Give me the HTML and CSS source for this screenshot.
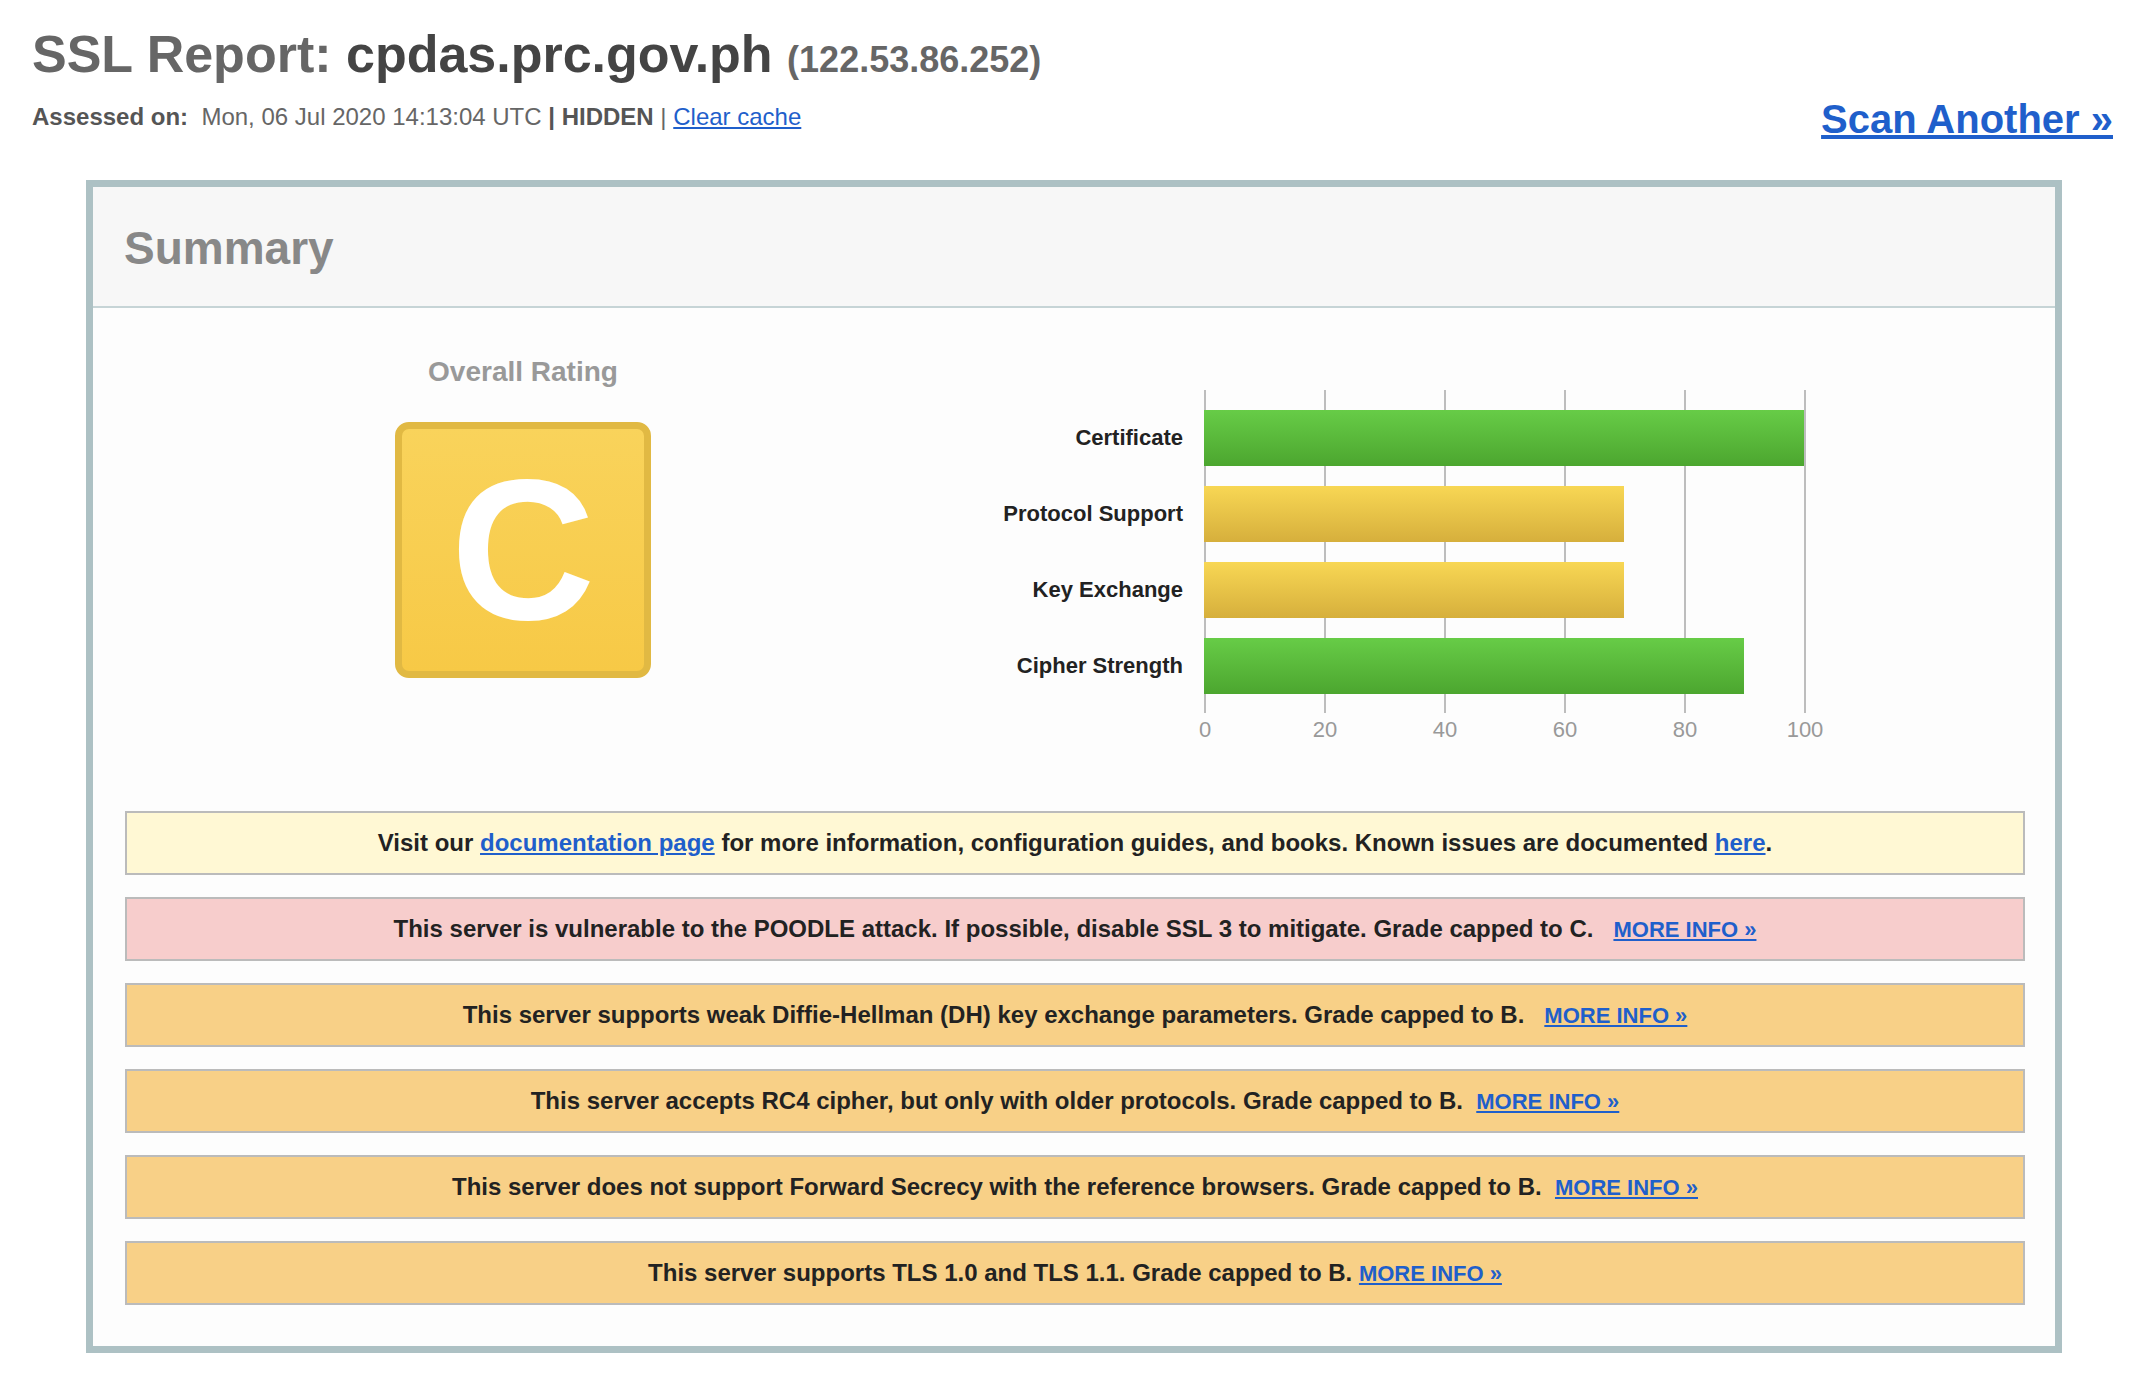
FILE: index.html
```html
<!DOCTYPE html>
<html lang="en">
<head>
<meta charset="utf-8">
<title>SSL Report: cpdas.prc.gov.ph</title>
<link rel="stylesheet" href="styles.css">
</head>
<body>
<div class="top">
  <div class="heading">
    <h1 class="report-title"><span class="lbl">SSL Report:</span> <span class="host">cpdas.prc.gov.ph</span> <span class="ip">(122.53.86.252)</span></h1>
    <div class="assessed"><b>Assessed on:</b>&nbsp; Mon, 06 Jul 2020 14:13:04 UTC <b>| HIDDEN</b> | <a href="#">Clear cache</a></div>
  </div>
  <a class="scan" href="#">Scan Another »</a>
</div>

<div class="report">
  <div class="report-head">Summary</div>
  <div class="report-body">
    <div class="overview">
      <div class="rating-col">
        <div class="rating-label">Overall Rating</div>
        <div class="grade">C</div>
      </div>
      <div class="chart">
        <div class="labels">
          <div class="label">Certificate</div>
          <div class="label">Protocol Support</div>
          <div class="label">Key Exchange</div>
          <div class="label">Cipher Strength</div>
        </div>
        <div class="plot">
          <div class="bar green" style="width:600px"></div>
          <div class="bar yellow" style="width:420px"></div>
          <div class="bar yellow" style="width:420px"></div>
          <div class="bar green" style="width:540px"></div>
        </div>
        <div class="axis">
          <span class="tick">0</span>
          <span class="tick">20</span>
          <span class="tick">40</span>
          <span class="tick">60</span>
          <span class="tick">80</span>
          <span class="tick">100</span>
        </div>
      </div>
    </div>
    <div class="msgs">
      <div class="msg info">Visit our <a href="#">documentation page</a> for more information, configuration guides, and books. Known issues are documented <a href="#">here</a>.</div>
      <div class="msg error">This server is vulnerable to the POODLE attack. If possible, disable SSL 3 to mitigate. Grade capped to C.&nbsp;&nbsp; <a class="more" href="#">MORE INFO »</a></div>
      <div class="msg warn">This server supports weak Diffie-Hellman (DH) key exchange parameters. Grade capped to B.&nbsp;&nbsp; <a class="more" href="#">MORE INFO »</a></div>
      <div class="msg warn">This server accepts RC4 cipher, but only with older protocols. Grade capped to B.&nbsp; <a class="more" href="#">MORE INFO »</a></div>
      <div class="msg warn">This server does not support Forward Secrecy with the reference browsers. Grade capped to B.&nbsp; <a class="more" href="#">MORE INFO »</a></div>
      <div class="msg warn">This server supports TLS 1.0 and TLS 1.1. Grade capped to B. <a class="more" href="#">MORE INFO »</a></div>
    </div>
  </div>
</div>
</body>
</html>
```

FILE: styles.css
```css
* { box-sizing: border-box; }

body {
  margin: 0;
  background: #ffffff;
  font-family: "Liberation Sans", Arial, Helvetica, sans-serif;
  color: #222222;
}

a { color: #1f5fcb; }

.top {
  display: flex;
  justify-content: space-between;
  align-items: flex-start;
  padding: 24px 31px 0 32px;
}

.report-title {
  margin: 0;
  font-size: 52px;
  line-height: 60px;
  font-weight: bold;
  color: #666666;
  white-space: nowrap;
}
.report-title .host { color: #444444; }
.report-title .ip { font-size: 36px; color: #666666; }

.assessed {
  margin-top: 13px;
  font-size: 24px;
  line-height: 28px;
  color: #666666;
  white-space: nowrap;
}
.assessed b { color: #555555; }

.scan {
  margin-top: 72px;
  font-size: 40px;
  line-height: 46px;
  font-weight: bold;
  white-space: nowrap;
}

.report {
  margin: 38px 0 0 86px;
  width: 1976px;
  border: 7px solid #adc1c4;
  background: #fdfdfd;
}

.report-head {
  height: 121px;
  padding: 35px 0 0 31px;
  background: #f7f7f7;
  border-bottom: 2px solid #c6d4d6;
  font-size: 46px;
  line-height: 52px;
  font-weight: bold;
  color: #888888;
}

.overview {
  display: flex;
  align-items: flex-start;
}

.rating-col {
  width: 860px;
  padding-top: 48px;
  text-align: center;
}

.rating-label {
  font-size: 28px;
  line-height: 31px;
  font-weight: bold;
  color: #999999;
}

.grade {
  width: 256px;
  height: 256px;
  margin: 35px auto 0;
  border: 7px solid #e1b943;
  border-radius: 14px;
  background: linear-gradient(#f9d35b, #f7c946);
  color: #ffffff;
  font-size: 200px;
  line-height: 242px;
  font-weight: bold;
  text-align: center;
}

.chart {
  margin-top: 82px;
  display: grid;
  grid-template-columns: 230px 602px;
  column-gap: 21px;
}

.labels {
  padding-top: 20px;
  display: flex;
  flex-direction: column;
  gap: 20px;
}

.label {
  height: 56px;
  line-height: 56px;
  text-align: right;
  font-size: 22px;
  font-weight: bold;
  color: #222222;
  white-space: nowrap;
}

.plot {
  height: 323px;
  padding-top: 20px;
  display: flex;
  flex-direction: column;
  gap: 20px;
  background-image: linear-gradient(to right, #bdbdbd 0, #bdbdbd 2px, transparent 2px);
  background-size: 120px 100%;
  background-repeat: repeat-x;
}

.bar { height: 56px; }
.bar.green { background: linear-gradient(#67cc47, #4ca62f); }
.bar.yellow { background: linear-gradient(#f8d754, #d6af3c); }

.axis {
  grid-column: 2;
  margin: 4px 0 0 1px;
  width: 600px;
  display: flex;
  justify-content: space-between;
}

.tick {
  width: 0;
  display: flex;
  justify-content: center;
  font-size: 22px;
  line-height: 26px;
  color: #999999;
}

.msgs {
  margin-top: 68px;
  padding: 0 30px 41px 32px;
  display: flex;
  flex-direction: column;
  gap: 22px;
}

.msg {
  height: 64px;
  border: 2px solid #bbbbbb;
  line-height: 60px;
  text-align: center;
  font-size: 24px;
  font-weight: bold;
  color: #222222;
  white-space: nowrap;
}
.msg .more { font-size: 22px; }
.msg.info { background: #fff8d4; }
.msg.error { background: #f7cdcc; }
.msg.warn { background: #f8d087; }
```
